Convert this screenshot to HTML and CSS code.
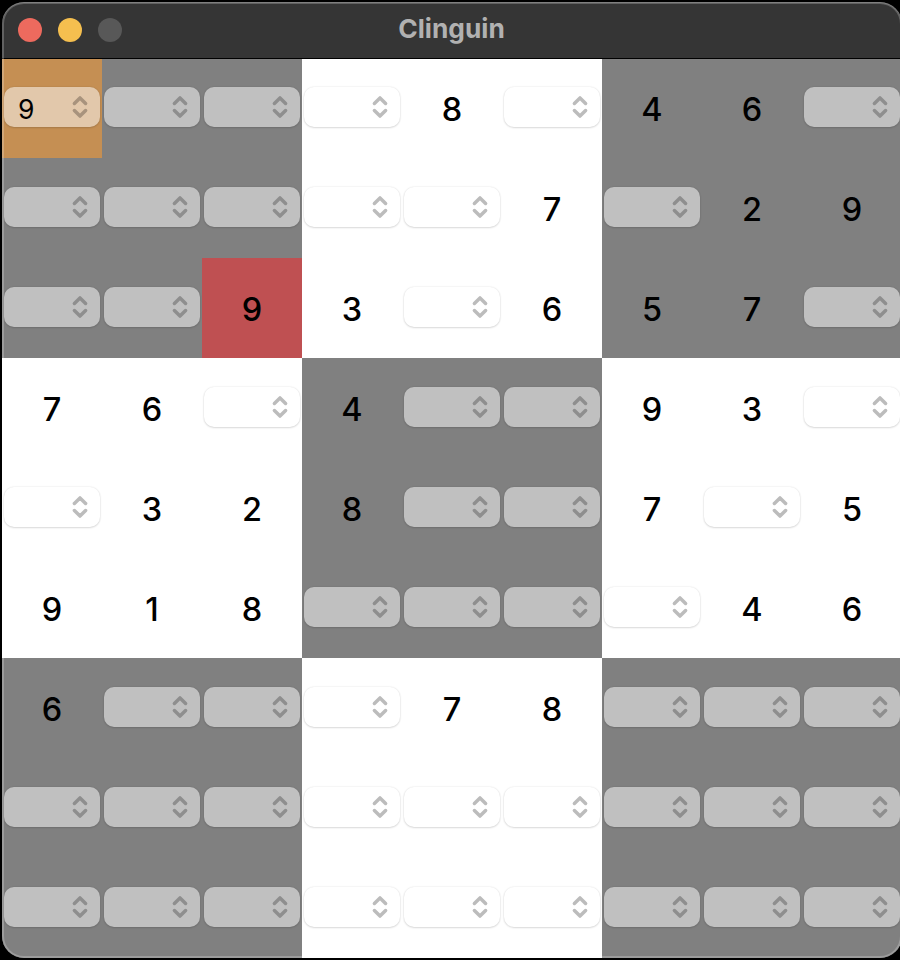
FILE: index.html
```
<!DOCTYPE html>
<html lang="en">
<head>
<meta charset="utf-8">
<title>Clinguin</title>
<link rel="stylesheet" href="styles.css">
</head>
<body>
<main class="window">
  <header class="titlebar">
    <div class="lights">
      <span class="light close"></span>
      <span class="light minimize"></span>
      <span class="light zoom"></span>
    </div>
    <h1 class="title">Clinguin</h1>
  </header>
  <section class="board" id="board"></section>
</main>
<script src="board.js"></script>
</body>
</html>
```

FILE: styles.css
```
* {
  box-sizing: border-box;
}

body {
  margin: 0;
  width: 900px;
  height: 960px;
  padding: 2px 0 0 2px;
  overflow: hidden;
  background: #000;
  font-family: Inter, "Liberation Sans", sans-serif;
}

.window {
  position: relative;
  width: 900px;
  height: 956px;
  border-radius: 22px;
  overflow: hidden;
  background: #808080;
}

/* Translucent rim over the window's contents */
.window::after {
  content: "";
  position: absolute;
  inset: 0;
  z-index: 2;
  border-radius: 22px;
  box-shadow: inset 0 0 0 2px rgba(255, 255, 255, 0.22), inset 0 1px 0 rgba(255, 255, 255, 0.2);
  pointer-events: none;
}

.titlebar {
  position: relative;
  z-index: 1;
  display: grid;
  grid-template-columns: 120px 1fr 120px;
  height: 56px;
  background: #353535;
  box-shadow: 0 1px 0 #000;
}

.lights {
  display: flex;
  gap: 16px;
  padding: 16px 0 0 16px;
}

.light {
  width: 24px;
  height: 24px;
  border-radius: 50%;
}

.close { background: #ed6a5e; }
.minimize { background: #f5bf4f; }
.zoom { background: #585858; }

.title {
  margin: 0;
  color: #b1b1b1;
  font-size: 26.3px;
  font-weight: 700;
  line-height: 54px;
  text-align: center;
  text-indent: -1px;
}

.board {
  display: grid;
  grid-template-columns: repeat(3, 300px);
  height: 900px;
}

.box {
  display: grid;
  grid-template-columns: repeat(3, 100px);
  grid-template-rows: repeat(3, 100px);
  height: 300px;
  background: #808080;
}

.box.light-box { background: #fff; }

.cell {
  padding: 29px 2px 0;
  color: #000;
  text-align: center;
}

.cell.chosen { background: #c58f53; }
.cell.conflict { background: #bf5052; }

.digit {
  display: block;
  font-size: 32.5px;
  font-weight: 460;
  line-height: 45px;
}

.select {
  display: flex;
  align-items: center;
  justify-content: space-between;
  height: 40px;
  padding: 0 11px 0 14px;
  border-radius: 10px;
  background: #c0c0c0;
  box-shadow: 0 1px 2px rgba(0, 0, 0, 0.12), 0 0 2px rgba(0, 0, 0, 0.12);
  color: #8e8e8e;
}

.light-box .select {
  background: #fff;
  color: #bcbcbc;
}

.chosen .select {
  background: #e2c8ab;
  color: #a8937d;
}

.value {
  color: #000;
  font-size: 26.5px;
  font-weight: 400;
  line-height: 40px;
  padding-top: 4px;
}

.chevrons {
  width: 18px;
  height: 24px;
  margin-left: auto;
}
```

FILE: board.js
```
// Nine boxes of nine cells. "." is an empty select, "s9" a select with a
// value, "!9" a conflicting digit, anything else a fixed digit.
const boxes = [
  "s9 . . . . . . . !9", ". 8 . . . 7 3 . 6", "4 6 . . 2 9 5 7 .",
  "7 6 . . 3 2 9 1 8", "4 . . 8 . . . . .", "9 3 . 7 . 5 . 4 6",
  "6 . . . . . . . .", ". 7 8 . . . . . .", ". . . . . . . . ."
];

const chevrons = `<svg class="chevrons" viewBox="0 0 18 24" fill="none" stroke="currentColor" stroke-width="3.5" stroke-linecap="round" stroke-linejoin="round"><path d="M3.4 8.4 9 2.9l5.6 5.5M3.4 15.6 9 21.1l5.6-5.5"/></svg>`;

function cell(code) {
  if (code === ".") return `<div class="cell"><div class="select">${chevrons}</div></div>`;
  if (code[0] === "s") return `<div class="cell chosen"><div class="select"><span class="value">${code[1]}</span>${chevrons}</div></div>`;
  if (code[0] === "!") return `<div class="cell conflict"><span class="digit">${code[1]}</span></div>`;
  return `<div class="cell"><span class="digit">${code}</span></div>`;
}

document.getElementById("board").innerHTML = boxes
  .map((box, i) => `<div class="box${i % 2 ? " light-box" : ""}">${box.split(" ").map(cell).join("")}</div>`)
  .join("");
```
